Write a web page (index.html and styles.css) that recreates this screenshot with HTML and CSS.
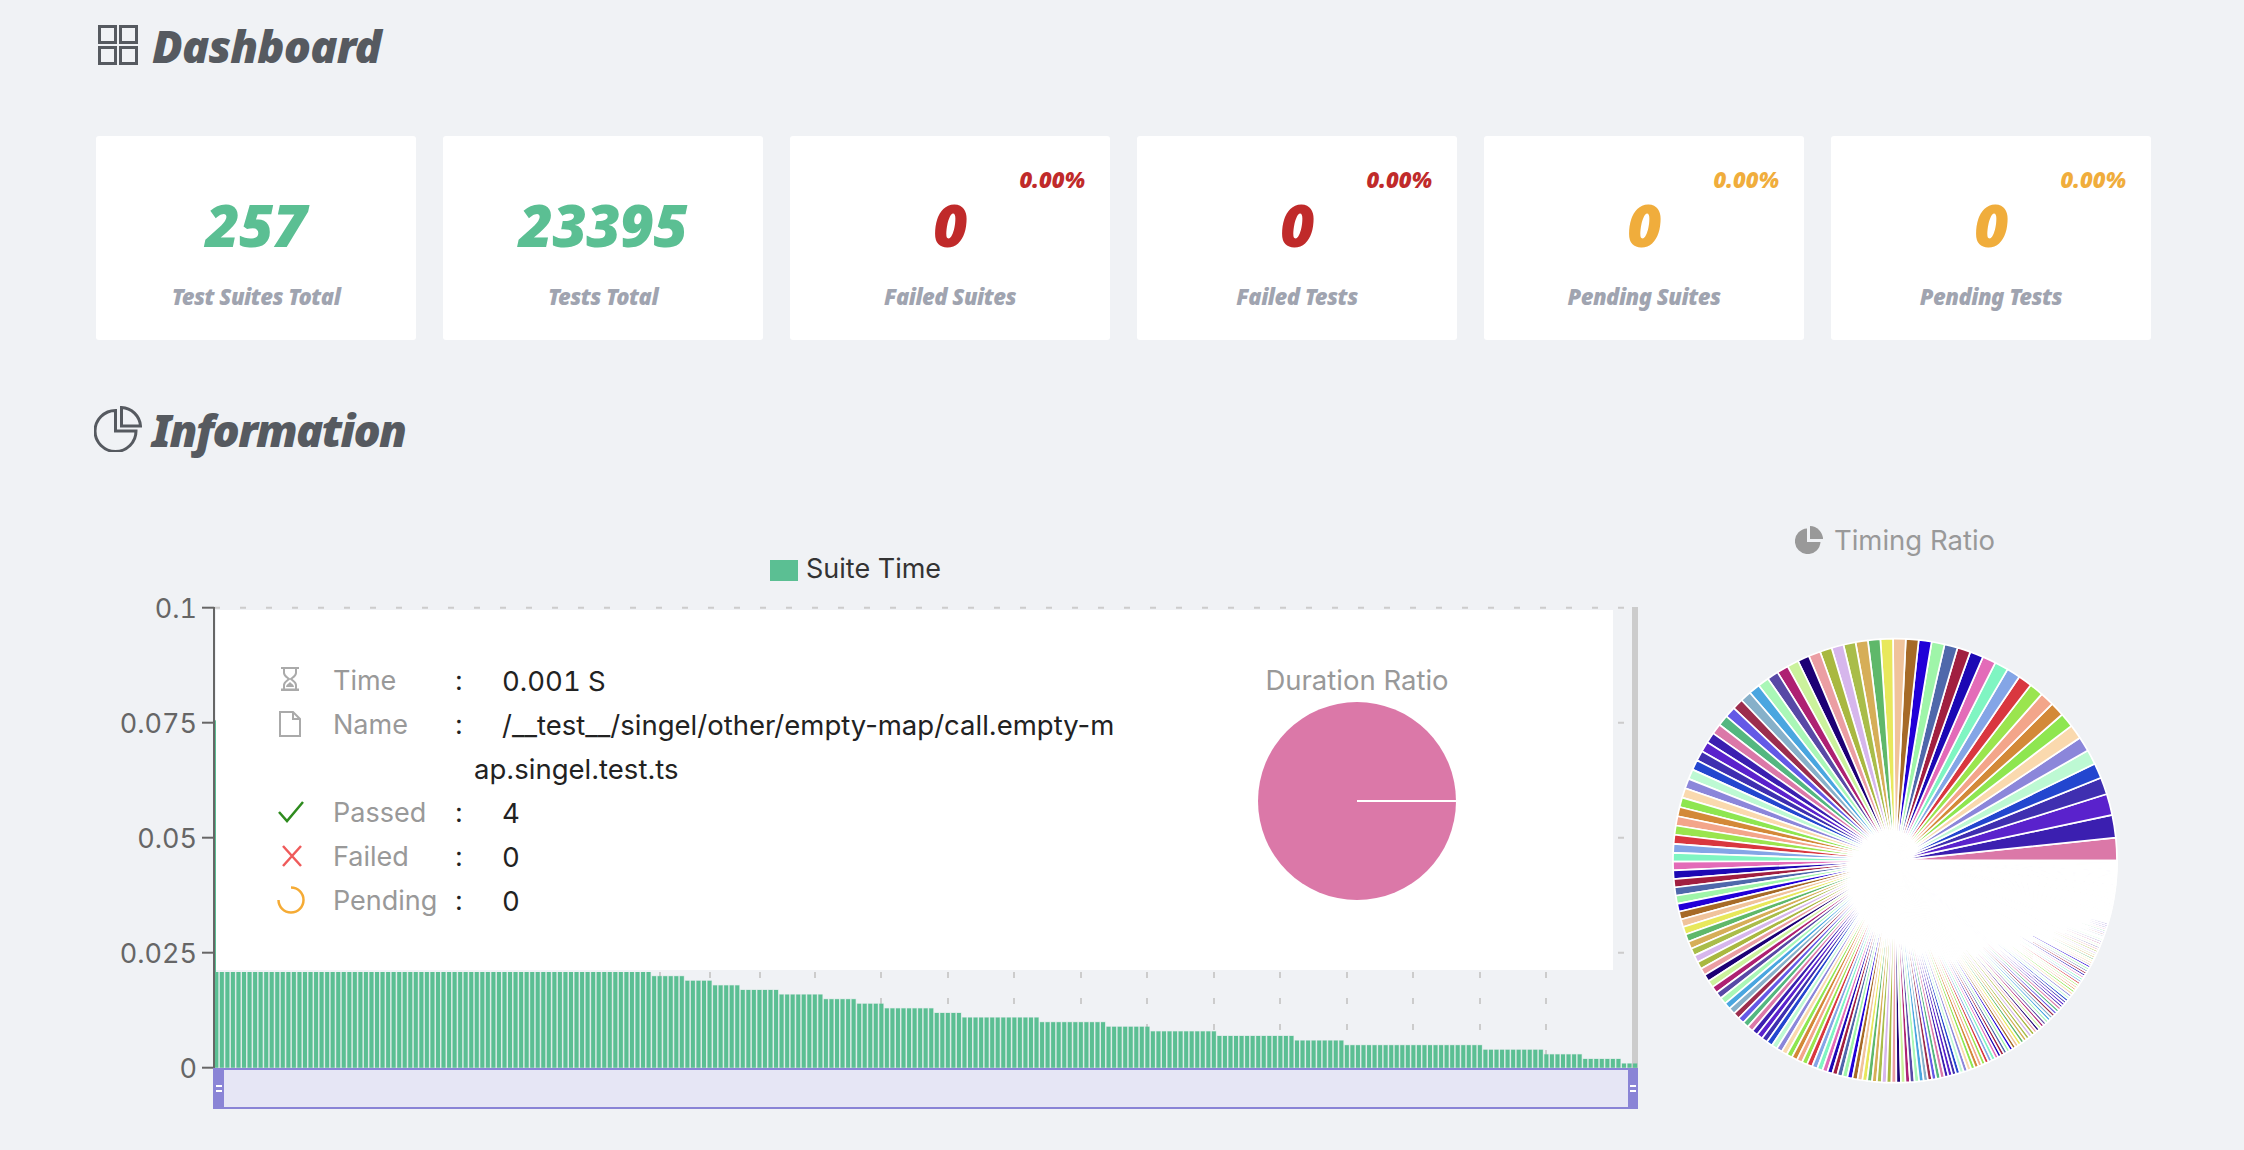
FILE: index.html
```html
<!DOCTYPE html>
<html lang="en">
<head>
    <meta charset="UTF-8">
    <meta name="viewport" content="width=device-width, initial-scale=1.0">
    <title>Test Report</title>
    <link rel="stylesheet" href="styles.css">
</head>
<body>

<div class="page">
    <h2 class="section-title">
        <svg class="section-icon" width="40" height="40" viewBox="98 25 40 40">
            <rect x="99.5" y="26.5" width="16" height="16"/>
            <rect x="120.5" y="26.5" width="16" height="16"/>
            <rect x="99.5" y="47.5" width="16" height="16"/>
            <rect x="120.5" y="47.5" width="16" height="16"/>
        </svg>
        Dashboard
    </h2>

    <div class="cards">
        <div class="card">
            <div class="card-num green">257</div>
            <div class="card-label">Test Suites Total</div>
        </div>
        <div class="card">
            <div class="card-num green">23395</div>
            <div class="card-label">Tests Total</div>
        </div>
        <div class="card">
            <div class="card-pct red">0.00%</div>
            <div class="card-num red">0</div>
            <div class="card-label">Failed Suites</div>
        </div>
        <div class="card">
            <div class="card-pct red">0.00%</div>
            <div class="card-num red">0</div>
            <div class="card-label">Failed Tests</div>
        </div>
        <div class="card">
            <div class="card-pct orange">0.00%</div>
            <div class="card-num orange">0</div>
            <div class="card-label">Pending Suites</div>
        </div>
        <div class="card">
            <div class="card-pct orange">0.00%</div>
            <div class="card-num orange">0</div>
            <div class="card-label">Pending Tests</div>
        </div>
    </div>

    <h2 class="section-title info-title">
        <svg class="section-icon" width="48" height="46" viewBox="94 406 48 46">
            <path d="M115.5 410.5a20.5 20.5 0 1 0 20.5 20.5h-20.5z"/>
            <path d="M121.5 407.5a20 20 0 0 1 19 18.5h-19z"/>
        </svg>
        Information
    </h2>

    <div class="charts">
        <div class="bar-chart">
            <!-- viewBox uses page coordinates so the chart numbers read straight -->
            <svg class="bar-svg" width="1564" height="590" viewBox="96 540 1564 590">
                <rect class="legend-swatch" x="770" y="560" width="28" height="21"/>
                <text class="legend-text" x="806" y="578">Suite Time</text>
                <g id="grid"></g>
                <rect class="hover-shadow" x="1632" y="607" width="6" height="461"/>
                <g id="bars"></g>
                <line class="axis" x1="214" y1="607" x2="214" y2="1068"/>
                <g id="ticks"></g>
                <g class="slider">
                    <rect class="slider-fill" x="213" y="1068" width="1425" height="41"/>
                    <rect class="slider-line" x="213" y="1068" width="1425" height="2"/>
                    <rect class="slider-line" x="213" y="1107" width="1425" height="2"/>
                    <rect class="slider-line" x="213" y="1068" width="11" height="41"/>
                    <rect class="slider-line" x="1628" y="1068" width="10" height="41"/>
                    <rect class="slider-grip" x="216" y="1085" width="6" height="2"/>
                    <rect class="slider-grip" x="216" y="1090" width="6" height="2"/>
                    <rect class="slider-grip" x="1630" y="1085" width="6" height="2"/>
                    <rect class="slider-grip" x="1630" y="1090" width="6" height="2"/>
                </g>
            </svg>

            <div class="tooltip">
                <div class="tip-list">
                    <div class="tip-row">
                        <svg class="tip-icon" width="24" height="26" viewBox="0 0 24 26">
                            <path class="icon-grey" d="M3 2h18M6 3v4c0 3 3.500 4.500 5 6-1.500 1.500-5 3-5 6v4M18 3v4c0 3-3.500 4.500-5 6 1.500 1.500 5 3 5 6v4"/>
                            <path class="icon-grey-fill" d="M3 22.500h18V25H3zM8 21c0-2 2.500-3.500 4-5 1.500 1.500 4 3 4 5z"/>
                        </svg>
                        <span class="tip-label">Time</span>
                        <span class="tip-colon">:</span>
                        <span class="tip-value tip-num">0.001 S</span>
                    </div>
                    <div class="tip-row">
                        <svg class="tip-icon" width="24" height="28" viewBox="0 0 24 28">
                            <path class="icon-grey" d="M2 2h13l7 7v17H2zM15 2v7h7"/>
                        </svg>
                        <span class="tip-label">Name</span>
                        <span class="tip-colon">:</span>
                        <span class="tip-value">/__test__/singel/other/empty-map/call.empty-map.singel.test.ts</span>
                    </div>
                    <div class="tip-row">
                        <svg class="tip-icon tip-icon-small" width="26" height="22" viewBox="0 0 26 22">
                            <path class="icon-pass" d="M1 11l8 9L25 1"/>
                        </svg>
                        <span class="tip-label">Passed</span>
                        <span class="tip-colon">:</span>
                        <span class="tip-value tip-num">4</span>
                    </div>
                    <div class="tip-row">
                        <svg class="tip-icon tip-icon-small tip-icon-fail" width="20" height="22" viewBox="0 0 20 22">
                            <path class="icon-fail" d="M1 1l18 20M19 1L1 21"/>
                        </svg>
                        <span class="tip-label">Failed</span>
                        <span class="tip-colon">:</span>
                        <span class="tip-value tip-num">0</span>
                    </div>
                    <div class="tip-row">
                        <svg class="tip-icon tip-icon-pend" width="28" height="28" viewBox="0 0 28 28">
                            <path class="icon-pend" d="M14 1.500A12.500 12.500 0 1 1 1.500 14"/>
                        </svg>
                        <span class="tip-label">Pending</span>
                        <span class="tip-colon">:</span>
                        <span class="tip-value tip-num">0</span>
                    </div>
                </div>
                <div class="tip-ratio">
                    <div class="tip-ratio-title">Duration Ratio</div>
                    <svg width="198" height="198" viewBox="0 0 198 198">
                        <circle class="ratio-pie" cx="99" cy="99" r="99"/>
                        <line class="ratio-cut" x1="99" y1="99" x2="198" y2="99"/>
                    </svg>
                </div>
            </div>
        </div>

        <div class="pie-chart">
            <div class="pie-title">
                <svg width="28" height="28" viewBox="0 0 28 28">
                    <path class="pie-title-icon" d="M12 2.500a12.800 12.800 0 1 0 13.500 13.500H12z"/>
                    <path class="pie-title-icon" d="M15 0a13.500 13.500 0 0 1 13 13H15z"/>
                </svg>
                Timing Ratio
            </div>
            <svg class="pie-svg" width="456" height="456" viewBox="1667 633 456 456" id="pie"></svg>
        </div>
    </div>
</div>

<script src="charts.js"></script>
</body>
</html>
```

FILE: styles.css
```css
body {
    margin: 0;
    background-color: #f0f2f5;
    font-family: "Inter", "Liberation Sans", sans-serif;
}

.page {
    width: 2055px;
    margin-left: 96px;
    padding-top: 25px;
}

.section-title {
    display: flex;
    align-items: center;
    gap: 14px;
    height: 40px;
    margin: 0;
    font-family: "Noto Sans", sans-serif;
    font-size: 45px;
    font-weight: 900;
    font-style: italic;
    letter-spacing: -0.85px;
    color: #565a60;
}

.section-icon {
    margin-left: 2px;
    flex: none;
    fill: none;
    stroke: #565a60;
    stroke-width: 3;
}

.info-title {
    height: 46px;
    margin-top: 66px;
    gap: 10px;
    letter-spacing: -1.7px;
}

.info-title .section-icon {
    margin-left: -2px;
}

.cards {
    display: grid;
    grid-template-columns: repeat(6, 320px);
    gap: 27px;
    margin-top: 71px;
}

.card {
    position: relative;
    height: 204px;
    padding-top: 48px;
    box-sizing: border-box;
    border-radius: 3px;
    background-color: #fff;
    font-family: "Noto Sans", sans-serif;
    font-weight: 900;
    font-style: italic;
    text-align: center;
}

.card-num {
    font-size: 59px;
    line-height: 80px;
    letter-spacing: -0.5px;
}

.card-label {
    margin-top: 17px;
    font-size: 22px;
    line-height: 30px;
    letter-spacing: -0.5px;
    color: #a0a4b0;
}

.card-pct {
    position: absolute;
    top: 28px;
    right: 25px;
    font-size: 22px;
    line-height: 30px;
}

.green {
    color: #5bbf93;
}

.red {
    color: #c02a2a;
}

.orange {
    color: #f0ad3c;
}

.charts {
    display: flex;
    margin-top: 88px;
}

.bar-chart {
    position: relative;
    width: 1564px;
    height: 590px;
    flex: none;
}

.bar-svg {
    display: block;
}

.legend-swatch {
    fill: #5bbf93;
}

.legend-text {
    font-size: 27px;
    fill: #333;
}

.grid-line {
    stroke: #ccc;
    stroke-width: 2;
    stroke-dasharray: 6 20;
}

.hover-shadow {
    fill: #ccc;
}

.bar {
    fill: #5bbf93;
    stroke: rgba(91, 191, 147, 0.25);
    stroke-width: 1;
}

.axis,
.tick {
    stroke: #666;
    stroke-width: 2;
}

.tick-label {
    font-size: 27px;
    font-feature-settings: "tnum";
    fill: #666;
    text-anchor: end;
}

.slider-fill {
    fill: #e6e6f5;
}

.slider-line {
    fill: #8a84d6;
}

.slider-grip {
    fill: #fff;
}

.tooltip {
    position: absolute;
    top: 70px;
    left: 120px;
    display: flex;
    width: 1397px;
    height: 360px;
    background-color: #fff;
    box-shadow: 0 2px 0 #f0f2f5;
}

.tip-list {
    width: 1000px;
    padding: 49px 0 0 62px;
    box-sizing: border-box;
}

.tip-row {
    display: grid;
    grid-template-columns: 55px 122px 19px 646px;
    align-items: start;
    font-size: 27px;
    line-height: 44px;
}

.tip-icon {
    margin-top: 7px;
}

.tip-icon-small {
    margin-top: 10px;
}

.tip-icon-fail {
    margin-left: 4px;
}

.tip-icon-pend {
    margin-left: -1px;
}

.tip-label {
    color: #999;
}

.tip-colon {
    color: #222;
}

.tip-value {
    color: #222;
    font-size: 27.5px;
    text-indent: 28px;
    word-break: break-all;
}

.tip-num {
    font-feature-settings: "tnum";
}

.icon-grey {
    fill: none;
    stroke: #aaa;
    stroke-width: 2;
}

.icon-grey-fill {
    fill: #aaa;
}

.icon-pass {
    fill: none;
    stroke: #2e8b1e;
    stroke-width: 2.5;
}

.icon-fail {
    fill: none;
    stroke: #ef5b5b;
    stroke-width: 2.5;
}

.icon-pend {
    fill: none;
    stroke: #f5ab35;
    stroke-width: 2.5;
}

.tip-ratio {
    display: flex;
    flex-direction: column;
    align-items: center;
    width: 282px;
    padding-top: 48px;
    box-sizing: border-box;
}

.tip-ratio-title {
    font-size: 27.5px;
    line-height: 44px;
    color: #999;
}

.ratio-pie {
    fill: #db78a8;
}

.ratio-cut {
    stroke: #fff;
    stroke-width: 2;
}

.pie-chart {
    width: 491px;
    flex: none;
}

.pie-title {
    display: flex;
    align-items: center;
    justify-content: center;
    gap: 11px;
    width: 470px;
    margin-top: -28px;
    height: 56px;
    font-size: 27.5px;
    color: #999;
}

.pie-title-icon {
    fill: #999;
}

.pie-svg {
    display: block;
    margin: 65px 0 0 7px;
}

.slice {
    stroke: #fff;
    stroke-width: 1.7;
    stroke-linejoin: round;
}
```

FILE: charts.js
```js
var SVG_NS = "http://www.w3.org/2000/svg";

function addNode(parent, tag, className, attrs) {
	var node = document.createElementNS(SVG_NS, tag);
	node.setAttribute("class", className);
	for (var key in attrs) {
		node.setAttribute(key, attrs[key]);
	}
	parent.appendChild(node);
	return node;
}

// degrees of the biggest suites, read off the pie. knots are [index, degrees]
var KNOTS = [[5, 3.9], [23, 3.3], [40, 2.8], [60, 2.1], [79, 1.66]];
var MS_PER_DEGREE = 12.6;
var HEAD = [6, 6, 5.6, 4.5, 4];

// the tail of the list is whole milliseconds: [ms, how many suites]
var RUNS = [[20, 6], [19, 5], [18, 5], [17, 7], [16, 8], [15, 6], [14, 5], [13, 9], [12, 5], [11, 14],
	[10, 12], [9, 8], [8, 12], [7, 14], [6, 9], [5, 25], [4, 11], [3, 7], [2, 7], [1, 3]];

var COLORS = ["#db78a8", "#3b1fb0", "#5a22cc", "#3f2fb0", "#2346cf", "#bdf9d3", "#8b86da", "#fad9ae",
	"#8ee650", "#d38938", "#f3a58a", "#9ae54e", "#d9373f", "#84a5e6", "#7ff5c2", "#e36bb8",
	"#1c08b4", "#a11f40", "#4f68ab", "#9ff5a9", "#2100d8", "#a66a27", "#f0c39b", "#e8e85c",
	"#5fb86a", "#d6ae58", "#a9bd4a", "#d6b6ec", "#a9b840", "#eb9ea3", "#1d0075", "#cbf29c",
	"#ae2172", "#5849a6", "#a9f7b7", "#4aa6e0", "#86b0c9", "#9c2e4e", "#6459e6", "#54b780"];

function buildDurations() {
	var list = [];
	for (var i = 0; i < 79; i++) {
		var deg = HEAD[i];
		for (var k = 0; k < KNOTS.length - 1 && deg === undefined; k++) {
			if (i <= KNOTS[k + 1][0]) {
				var t = (i - KNOTS[k][0]) / (KNOTS[k + 1][0] - KNOTS[k][0]);
				deg = KNOTS[k][1] + t * (KNOTS[k + 1][1] - KNOTS[k][1]);
			}
		}
		list.push(deg * MS_PER_DEGREE);
	}
	RUNS.forEach(function (run) {
		for (var n = 0; n < run[1]; n++) {
			list.push(run[0]);
		}
	});
	return list;
}

function drawBarChart(durations) {
	var zeroY = 1067.7;
	var pxPerMs = 4.6;
	var grid = document.getElementById("grid");
	var ticks = document.getElementById("ticks");
	var bars = document.getElementById("bars");

	["0", "0.025", "0.05", "0.075", "0.1"].forEach(function (label, i) {
		var y = zeroY - i * 115;
		if (i > 0) {
			addNode(grid, "line", "grid-line", { x1: 214, y1: y, x2: 1632, y2: y });
		}
		addNode(ticks, "line", "tick", { x1: 202, y1: y, x2: 214, y2: y });
		var text = addNode(ticks, "text", "tick-label", { x: 197, y: y + 10 });
		text.textContent = label;
	});

	// only the part under the tooltip shows, so these start at its lower edge
	[660, 710, 760, 815, 881, 948, 1014, 1081, 1147, 1214, 1280, 1347, 1413, 1480, 1546].forEach(function (x) {
		addNode(grid, "line", "grid-line", { x1: x, y1: 972, x2: x, y2: 1068 });
	});

	durations.forEach(function (ms, i) {
		var height = Math.min(ms, 100) * pxPerMs - 0.5;
		addNode(bars, "rect", "bar", {
			x: 214.3 + i * 5.542,
			y: zeroY - height,
			width: 4,
			height: height
		});
	});
}

function drawPie(durations) {
	var pie = document.getElementById("pie");
	var cx = 1895, cy = 860.7, r = 222;
	var total = durations.reduce(function (a, b) { return a + b; }, 0);
	var angle = 0;
	durations.forEach(function (ms, i) {
		var next = angle + ms / total * Math.PI * 2;
		var d = "M" + cx + " " + cy +
			"L" + (cx + r * Math.cos(angle)).toFixed(2) + " " + (cy - r * Math.sin(angle)).toFixed(2) +
			"A" + r + " " + r + " 0 0 0 " + (cx + r * Math.cos(next)).toFixed(2) + " " + (cy - r * Math.sin(next)).toFixed(2) + "Z";
		addNode(pie, "path", "slice", { d: d, fill: COLORS[i % COLORS.length] });
		angle = next;
	});
}

var durations = buildDurations();
drawBarChart(durations);
drawPie(durations);
```
